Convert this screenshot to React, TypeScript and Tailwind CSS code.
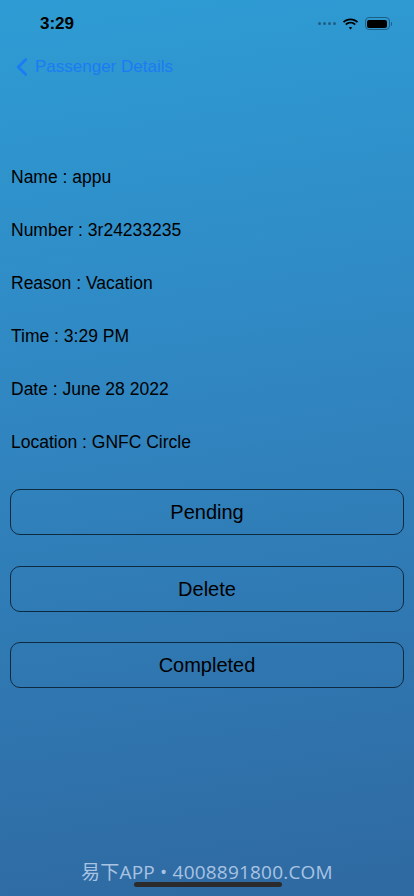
import { ChevronLeft } from 'lucide-react'

const details = [
  { label: 'Name', value: 'appu' },
  { label: 'Number', value: '3r24233235' },
  { label: 'Reason', value: 'Vacation' },
  { label: 'Time', value: '3:29 PM' },
  { label: 'Date', value: 'June 28 2022' },
  { label: 'Location', value: 'GNFC Circle' },
]

const actions = ['Pending', 'Delete', 'Completed']

function StatusBar() {
  return (
    <div className="flex h-[46px] items-center justify-between pl-[40px] pr-[22px] pt-[1px]">
      <span className="text-[17px] font-semibold text-black">3:29</span>
      <div className="flex items-center gap-[6px]">
        <div className="flex items-center gap-[2px]">
          {[0, 1, 2, 3].map((i) => (
            <span key={i} className="h-[3px] w-[3px] rounded-full bg-[#1d5f86]" />
          ))}
        </div>
        <svg width="17" height="12" viewBox="0 0 17 12">
          <path d="M8.5 2.2c2.5 0 4.7 1 6.4 2.6l1.2-1.3C14.1 1.6 11.4.4 8.5.4S2.9 1.6.9 3.5l1.2 1.3C3.8 3.2 6 2.2 8.5 2.2z" fill="black" />
          <path d="M8.5 5.6c1.6 0 3 .6 4.1 1.6l1.2-1.3C12.4 4.6 10.5 3.8 8.5 3.8S4.6 4.6 3.2 5.9l1.2 1.3c1.1-1 2.5-1.6 4.1-1.6z" fill="black" />
          <path d="M8.5 8.9c.7 0 1.3.3 1.8.7L8.5 11.6 6.7 9.6c.5-.4 1.1-.7 1.8-.7z" fill="black" />
        </svg>
        <div className="flex items-center">
          <div className="flex h-[13px] w-[25px] items-center rounded-[4px] border border-[#1d5f86] p-[1.5px]">
            <div className="h-full w-full rounded-[2px] bg-black" />
          </div>
          <div className="ml-[1px] h-[4px] w-[1.5px] rounded-r bg-[#1d5f86]" />
        </div>
      </div>
    </div>
  )
}

export default function App() {
  return (
    <div
      className="relative flex h-[896px] w-[414px] flex-col overflow-hidden bg-[linear-gradient(172deg,#2e9cd4_0%,#3085c0_45%,#2f69a1_100%)]"
      style={{ fontFamily: '"Liberation Sans", Arial, sans-serif' }}
    >
      <StatusBar />

      {/* Nav bar */}
      <div className="flex h-[42px] items-center pl-[7px]">
        <ChevronLeft className="h-[30px] w-[30px] text-[#1a7cf3]" strokeWidth={2.2} />
        <span className="ml-[-2px] text-[17px] text-[#1a7cf3]">Passenger Details</span>
      </div>

      {/* Details */}
      <div className="mt-[78px] flex flex-col gap-[31px] pl-[11px]">
        {details.map((d) => (
          <p key={d.label} className="h-[22px] text-[17.5px] leading-[22px] text-black">
            {d.label} : {d.value}
          </p>
        ))}
      </div>

      {/* Actions */}
      <div className="mt-[36px] flex flex-col gap-[30.5px] px-[10px]">
        {actions.map((a) => (
          <button
            key={a}
            className="flex h-[46px] items-center justify-center rounded-[10px] border border-[#0d2a40] text-[20px] text-black"
          >
            {a}
          </button>
        ))}
      </div>

      {/* Watermark + home indicator */}
      <div className="absolute bottom-[10px] left-0 right-0 flex justify-center">
        <span
          className="text-[19px] tracking-[0.2px] text-[#a9c3e3]"
          style={{ fontFamily: '"Open Sans", "Noto Sans CJK SC", sans-serif' }}
        >
          易下APP • 4008891800.COM
        </span>
      </div>
      <div className="absolute bottom-[9px] left-[134px] h-[5px] w-[148px] rounded-full bg-[#2b2b2b]" />
    </div>
  )
}
